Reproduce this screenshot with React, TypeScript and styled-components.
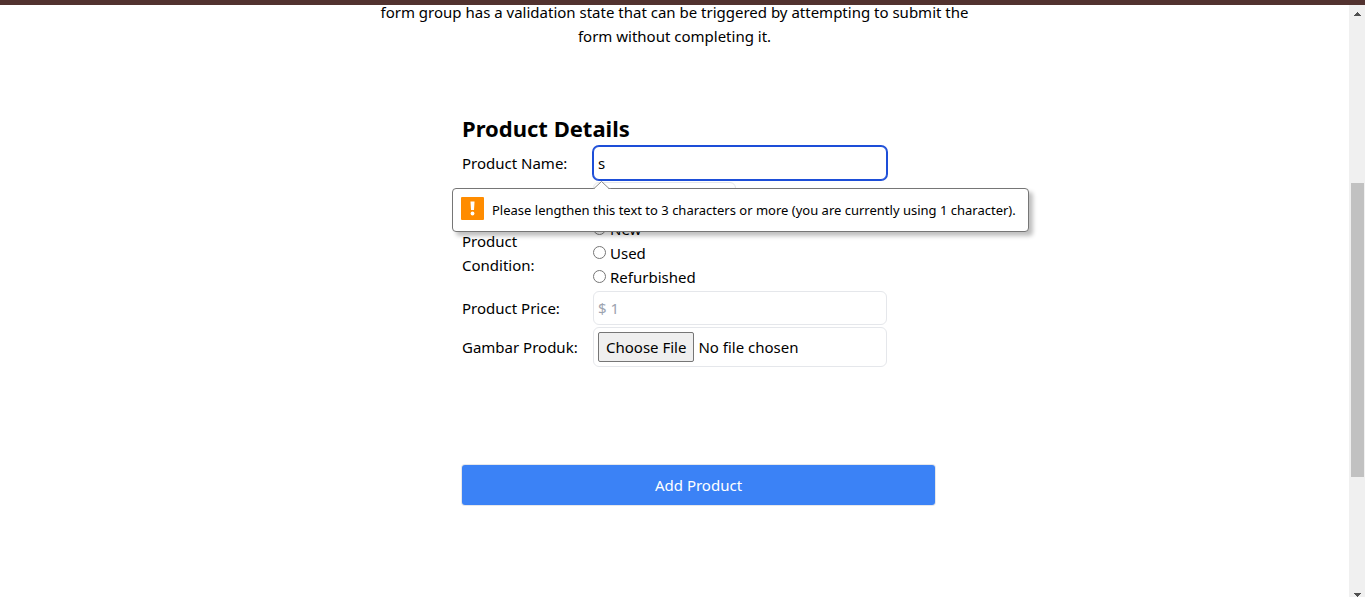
import React from "react";
import styled, { createGlobalStyle } from "styled-components";

const GlobalStyle = createGlobalStyle`
  *, *::before, *::after { box-sizing: border-box; }
  body {
    margin: 0;
    background: #fff;
    color: #000;
    font-family: "Segoe UI", "Noto Sans", "Open Sans", sans-serif;
    font-size: 15px;
    line-height: 24px;
  }
  button, input, select { margin: 0; font: inherit; color: inherit; }
  h2, p { margin: 0; }
`;

const TopStrip = styled.div`
  position: fixed;
  inset: 0 0 auto 0;
  height: 5px;
  background: #52322f;
  z-index: 5;
`;

const Shell = styled.div`
  display: flex;
  height: 100vh;
  overflow: hidden;
`;

const Main = styled.main`
  flex: 1;
  min-width: 0;
  display: flex;
  flex-direction: column;
  align-items: center;
  gap: 64px;
`;

const Intro = styled.p`
  max-width: 600px;
  text-align: center;
`;

const ProductForm = styled.form`
  width: 425px;
`;

const Heading = styled.h2`
  font-size: 22px;
  line-height: 32px;
  font-weight: 700;
`;

const Fields = styled.div`
  display: flex;
  flex-direction: column;
  gap: 2px;
  padding-top: 2px;
`;

const Row = styled.div`
  display: grid;
  grid-template-columns: 129px 1fr;
  column-gap: 2px;
  align-items: center;
`;

const ConditionGroup = styled(Row).attrs({ role: "radiogroup", "aria-labelledby": "condition" })``;

const Anchor = styled.div`
  position: relative;
  display: flex;
`;

const TextInput = styled.input<{ $active?: boolean }>`
  width: 100%;
  height: 34px;
  padding: 4px;
  border: 1px solid ${(p) => (p.$active ? "#1d4ed8" : "#e5e7eb")};
  border-radius: 6px;
  box-shadow: ${(p) => (p.$active ? "0 0 0 1px #1d4ed8" : "none")};
  background: #fff;
  outline: none;
  &::placeholder { color: #9ca3af; opacity: 1; }
`;

const Select = styled.select`
  grid-column: 2;
  width: 143px;
  height: 33px;
  padding: 4px;
  border: 1px solid #e5e7eb;
  border-radius: 6px;
  background: #fff;
`;

const FileInput = styled.input`
  width: 100%;
  height: 40px;
  padding: 4px;
  border: 1px solid #e5e7eb;
  border-radius: 6px;
  &::file-selector-button {
    height: 30px;
    margin: 0 4px 0 0;
    padding: 2px 7px;
    border: 1px solid #767676;
    border-radius: 2px;
    background: #efefef;
    color: #000;
    font: inherit;
  }
`;

const RadioList = styled.div`
  display: flex;
  flex-direction: column;
`;

const RadioLabel = styled.label`
  display: flex;
  align-items: center;
  gap: 4px;
  input { width: 13px; height: 13px; margin-bottom: 2px; }
`;

const Submit = styled.button`
  width: 473px;
  height: 40px;
  margin-top: 98px;
  border: 0;
  border-radius: 3px;
  box-shadow: 0 0 0 1px #e5e7eb;
  background: #3b82f6;
  color: #fff;
`;

const Bubble = styled.div`
  position: absolute;
  top: 42px;
  left: -141px;
  z-index: 2;
  display: flex;
  align-items: center;
  gap: 8px;
  width: 577px;
  height: 44px;
  padding: 0 8px;
  border: 1px solid #767676;
  border-radius: 4px;
  background: #fff;
  box-shadow: 4px 4px 4px rgba(0, 0, 0, 0.25);
  font-size: 13px;
  white-space: nowrap;
`;

const BubbleArrow = styled.svg`
  position: absolute;
  top: -8px;
  left: 140px;
`;

const WarningIcon = styled.svg`
  flex: none;
  margin-bottom: 3px;
`;

const ScrollBar = styled.div`
  display: flex;
  flex-direction: column;
  align-items: center;
  width: 16px;
  padding: 7px 0 0 1px;
  background: #f0f0f0;
`;

const Gap = styled.div<{ $grow: number }>`
  flex: ${(p) => p.$grow} 0 0;
`;

const Thumb = styled.div`
  flex: 294 0 0;
  width: 13px;
  background: #c1c1c1;
`;

const ScrollArrow = styled.svg`
  flex: none;
  margin-top: 5px;
`;

const conditions = ["New", "Used", "Refurbished"];

export default function App() {
  return (
    <>
      <GlobalStyle />
      <TopStrip />
      <Shell>
        <Main>
          <Intro>
            form group has a validation state that can be triggered by attempting to submit the form
            without completing it.
          </Intro>
          <ProductForm noValidate onSubmit={(e) => e.preventDefault()}>
            <Heading>Product Details</Heading>
            <Fields>
              <Row>
                <label htmlFor="name">Product Name:</label>
                <Anchor>
                  <TextInput id="name" $active defaultValue="s" minLength={3} aria-describedby="name-error" />
                  <Bubble id="name-error" role="alert">
                    <BubbleArrow width="18" height="9" viewBox="0 0 18 9" aria-hidden="true">
                      <path d="M1 9 L1 8 L8.500 .5 L16 8 L16 9 Z" fill="#fff" />
                      <path d="M0 7.500 H1 L8.500 .5 L16 7.500 H18" fill="none" stroke="#8a8a8a" />
                    </BubbleArrow>
                    <WarningIcon width="23" height="23" viewBox="0 0 23 23" aria-hidden="true">
                      <rect width="23" height="23" rx="1" fill="#ff8c00" />
                      <path d="M9.500 4.500 H13.500 L13 13 H10 Z" fill="#fff" />
                      <circle cx="11.500" cy="16.500" r="1.900" fill="#fff" />
                    </WarningIcon>
                    Please lengthen this text to 3 characters or more (you are currently using 1 character).
                  </Bubble>
                </Anchor>
              </Row>
              <Row>
                <Select aria-label="Product category" />
              </Row>
              <ConditionGroup>
                <span id="condition">
                  Product
                  <br />
                  Condition:
                </span>
                <RadioList>
                  {conditions.map((name) => (
                    <RadioLabel key={name}>
                      <input type="radio" name="condition" value={name} />
                      {name}
                    </RadioLabel>
                  ))}
                </RadioList>
              </ConditionGroup>
              <Row>
                <label htmlFor="price">Product Price:</label>
                <TextInput id="price" placeholder="$ 1" />
              </Row>
              <Row>
                <label htmlFor="image">Gambar Produk:</label>
                <FileInput id="image" type="file" />
              </Row>
            </Fields>
            <Submit type="submit">Add Product</Submit>
          </ProductForm>
        </Main>
        <ScrollBar aria-hidden="true">
          <ScrollArrow width="7" height="4" viewBox="0 0 7 4" shapeRendering="crispEdges">
            <path d="M3 0h1v1h1v1h1v1h1v1H0V3h1V2h1V1h1z" fill="#505050" />
          </ScrollArrow>
          <Gap $grow={167} />
          <Thumb />
          <Gap $grow={111} />
          <ScrollArrow width="7" height="4" viewBox="0 0 7 4" shapeRendering="crispEdges">
            <path d="M0 0h7v1H6v1H5v1H4v1H3V3H2V2H1V1H0z" fill="#505050" />
          </ScrollArrow>
        </ScrollBar>
      </Shell>
    </>
  );
}
